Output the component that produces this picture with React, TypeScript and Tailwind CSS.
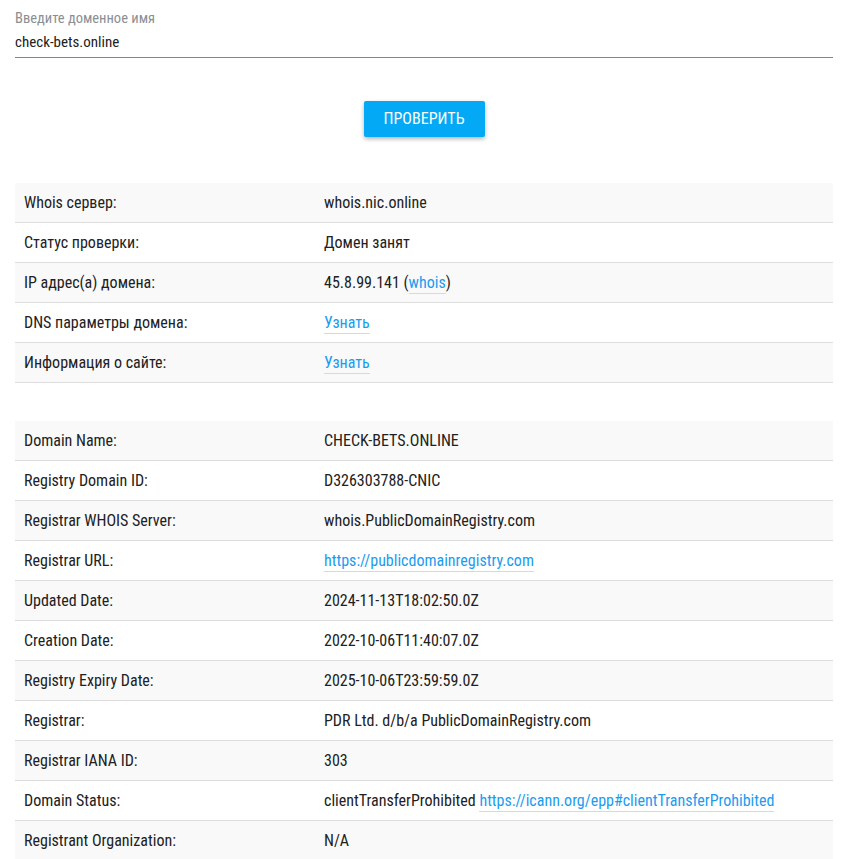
import React from 'react'

type Row = { label: string; value: React.ReactNode }

const Link: React.FC<{ children: React.ReactNode }> = ({ children }) => (
  <a href="#" className="text-[#1a9cf0] border-b border-[#b3e5fc] pb-[1px]">
    {children}
  </a>
)

const mainRows: Row[] = [
  { label: 'Whois сервер:', value: 'whois.nic.online' },
  { label: 'Статус проверки:', value: 'Домен занят' },
  {
    label: 'IP адрес(а) домена:',
    value: (
      <>
        45.8.99.141 (<Link>whois</Link>)
      </>
    ),
  },
  { label: 'DNS параметры домена:', value: <Link>Узнать</Link> },
  { label: 'Информация о сайте:', value: <Link>Узнать</Link> },
]

const whoisRows: Row[] = [
  { label: 'Domain Name:', value: 'CHECK-BETS.ONLINE' },
  { label: 'Registry Domain ID:', value: 'D326303788-CNIC' },
  { label: 'Registrar WHOIS Server:', value: 'whois.PublicDomainRegistry.com' },
  { label: 'Registrar URL:', value: <Link>https://publicdomainregistry.com</Link> },
  { label: 'Updated Date:', value: '2024-11-13T18:02:50.0Z' },
  { label: 'Creation Date:', value: '2022-10-06T11:40:07.0Z' },
  { label: 'Registry Expiry Date:', value: '2025-10-06T23:59:59.0Z' },
  { label: 'Registrar:', value: 'PDR Ltd. d/b/a PublicDomainRegistry.com' },
  { label: 'Registrar IANA ID:', value: '303' },
  {
    label: 'Domain Status:',
    value: (
      <>
        clientTransferProhibited <Link>https://icann.org/epp#clientTransferProhibited</Link>
      </>
    ),
  },
  { label: 'Registrant Organization:', value: 'N/A' },
]

const InfoTable: React.FC<{ rows: Row[] }> = ({ rows }) => (
  <div className="flex flex-col">
    {rows.map((r, i) => (
      <div
        key={r.label}
        className={`flex h-[40px] items-center border-b border-[#dddddd] ${
          i % 2 === 0 ? 'bg-[#f9f9f9]' : 'bg-white'
        }`}
      >
        <div className="w-[300px] shrink-0 pl-[9px]">{r.label}</div>
        <div className="flex-1 pl-[9px]">{r.value}</div>
      </div>
    ))}
  </div>
)

export default function App() {
  return (
    <div
      className="bg-white pl-[15px] pr-[13px] text-[16px] text-[#212121] [font-stretch:condensed]"
      style={{ fontFamily: 'Roboto, "Liberation Sans", sans-serif' }}
    >
      {/* Domain input */}
      <div className="pt-[11px]">
        <div className="text-[14.5px] leading-[16px] text-[#8a8f94]">Введите доменное имя</div>
        <div className="mt-[6px] border-b border-[#7d868c] pb-[6px] text-[15px] leading-[18px]">
          check-bets.online
        </div>
      </div>

      <div className="flex justify-center pt-[43px]">
        <button className="h-[36px] w-[121px] rounded-[2px] bg-[#03a9f4] text-[16px] text-white shadow-[0_2px_4px_rgba(0,0,0,0.3)]">
          ПРОВЕРИТЬ
        </button>
      </div>

      <div className="mt-[46px]">
        <InfoTable rows={mainRows} />
      </div>
      <div className="mt-[38px]">
        <InfoTable rows={whoisRows} />
      </div>
    </div>
  )
}
